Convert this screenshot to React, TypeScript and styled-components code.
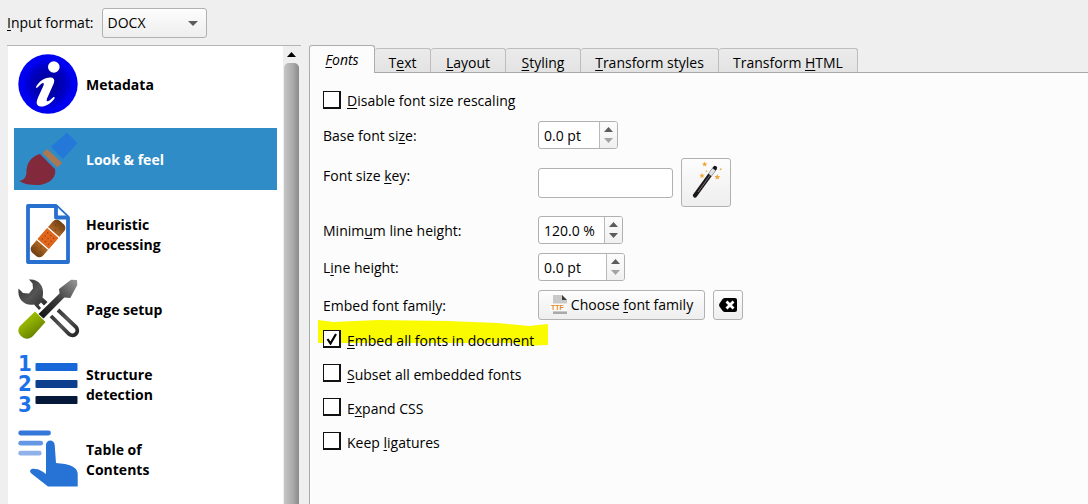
import React from "react";
import styled, { createGlobalStyle, css } from "styled-components";

const GlobalStyle = createGlobalStyle`
  *, *::before, *::after { box-sizing: border-box; }
  body { margin: 0; background: #efefef; }
  body, button, input, select {
    font-family: "Segoe UI", "Open Sans", "Noto Sans", sans-serif;
    font-size: 14px;
    line-height: 20px;
    color: #000;
  }
  u { text-decoration: underline; text-decoration-thickness: 1px; text-underline-offset: 2px; text-decoration-skip-ink: none; }
`;

const raised = css`
  border: 1px solid #b1b1b1;
  border-radius: 3px;
  background: linear-gradient(#fdfdfd, #eeeeee);
`;

const Page = styled.div`
  display: flex;
  flex-direction: column;
  min-height: 100vh;
`;

const FormatBar = styled.div`
  display: flex;
  align-items: center;
  gap: 8px;
  padding: 8px 7px 7px;
`;

const SelectBox = styled.div`
  display: grid;
  align-items: center;
  width: 105px;
  > * { grid-area: 1 / 1; }
  > svg { justify-self: end; margin-right: 9px; pointer-events: none; }
`;

const Select = styled.select`
  ${raised}
  appearance: none;
  width: 100%;
  height: 30px;
  padding: 0 24px 0 5px;
`;

const Body = styled.div`
  display: flex;
  flex: 1;
  gap: 8px;
  padding-left: 7px;
`;

const Sidebar = styled.nav`
  display: flex;
  flex: none;
  width: 294px;
  border-top: 1px solid #b4b4b4;
`;

const SectionList = styled.ul`
  display: flex;
  flex: 1;
  flex-direction: column;
  gap: 13px;
  margin: 0 0 0 1px;
  padding: 7px 6px;
  list-style: none;
  background: #fff;
`;

const SectionButton = styled.button<{ $selected?: boolean }>`
  display: flex;
  align-items: center;
  gap: 8px;
  width: 100%;
  height: 62px;
  padding: 0 4px;
  border: 0;
  text-align: left;
  font-weight: 700;
  color: ${(p) => (p.$selected ? "#fff" : "#000")};
  background: ${(p) => (p.$selected ? "#308cc6" : "transparent")};
`;

const SectionLabel = styled.span`
  width: 100px;
  padding-top: 2px;
`;

const ScrollBar = styled.div`
  display: flex;
  flex-direction: column;
  width: 18px;
  padding: 0 2px 0 1px;
`;

const ScrollButton = styled.button`
  display: flex;
  align-items: center;
  justify-content: center;
  height: 17px;
  padding: 0;
  border: 0;
  background: transparent;
`;

const ScrollThumb = styled.div`
  flex: 1;
  border-radius: 5px 5px 0 0;
  background: linear-gradient(90deg, #c6c6c6, #a9a9a9 60%, #8a8a8a);
`;

const Settings = styled.main`
  display: flex;
  flex: 1;
  flex-direction: column;
  min-width: 0;
`;

const TabList = styled.div`
  display: flex;
  align-items: flex-end;
  height: 27px;
`;

const Tab = styled.button<{ $width: number }>`
  width: ${(p) => p.$width}px;
  height: 24px;
  padding: 5px 0 0;
  border: 1px solid #bdbdbd;
  border-left-width: 0;
  border-bottom: 0;
  border-radius: 3px 3px 0 0;
  background: linear-gradient(#ebebeb, #e3e3e3);
  white-space: nowrap;
  line-height: 18px;
  &[aria-selected="true"] {
    z-index: 1;
    height: 28px;
    margin-bottom: -1px;
    padding: 4px 0;
    border-left-width: 1px;
    border-color: #adadad;
    background: #fcfcfc;
    font-style: italic;
  }
`;

const Pane = styled.section`
  display: flex;
  flex: 1;
  flex-direction: column;
  gap: 9px;
  padding: 16px 13px;
  border: 1px solid #a9a9a9;
  border-width: 1px 0 0 1px;
  background: #fcfcfc;
`;

const Row = styled.div<{ $top?: boolean }>`
  display: grid;
  grid-template-columns: 206px 1fr;
  align-items: ${(p) => (p.$top ? "start" : "center")};
  column-gap: 9px;
  > label { padding-top: ${(p) => (p.$top ? 8 : 2)}px; }
`;

const Controls = styled.div`
  display: flex;
  align-items: center;
  gap: 8px;
`;

const TextInput = styled.input`
  width: 135px;
  height: 30px;
  padding: 0 5px;
  border: 1px solid #b1b1b1;
  border-radius: 3px;
  background: #fff;
`;

const SpinFrame = styled.div<{ $width: number }>`
  display: flex;
  width: ${(p) => p.$width}px;
  height: 28px;
  overflow: hidden;
  border: 1px solid #b1b1b1;
  border-radius: 3px;
  background: #fff;
`;

const SpinInput = styled.input`
  flex: 1;
  min-width: 0;
  padding: 1px 0 0 5px;
  border: 0;
  background: transparent;
`;

const SpinButtons = styled.div`
  display: flex;
  flex-direction: column;
  width: 18px;
  border-left: 1px solid #b9b9b9;
  background: linear-gradient(#fcfcfc, #f0f0f0);
`;

const SpinButton = styled.button<{ $down?: boolean }>`
  display: flex;
  flex: 1;
  align-items: ${(p) => (p.$down ? "flex-start" : "flex-end")};
  justify-content: center;
  padding: 3px 0;
  border: 0;
  background: transparent;
  color: #5c5c5c;
  &:disabled { color: #a3a3a3; }
`;

const PushButton = styled.button<{ $width: number; $height: number }>`
  ${raised}
  display: flex;
  align-items: center;
  justify-content: center;
  gap: 3px;
  width: ${(p) => p.$width}px;
  height: ${(p) => p.$height}px;
  padding: 0;
  white-space: nowrap;
`;

const CheckGroup = styled.div`
  display: flex;
  flex-direction: column;
  gap: 14px;
`;

const CheckLabel = styled.label<{ $tall?: boolean }>`
  position: relative;
  display: flex;
  align-items: center;
  align-self: flex-start;
  gap: 6px;
  height: ${(p) => (p.$tall ? 23 : 20)}px;
  padding-bottom: ${(p) => (p.$tall ? 2 : 0)}px;
`;

const CheckText = styled.span`
  position: relative;
  padding-top: 3px;
`;

const CheckBox = styled.span`
  position: relative;
  display: grid;
  > svg { grid-area: 1 / 1; place-self: center; pointer-events: none; }
`;

const CheckInput = styled.input`
  grid-area: 1 / 1;
  appearance: none;
  width: 18px;
  height: 18px;
  margin: 0;
  border: 2px solid #111;
  border-width: 1px 2px 2px 1px;
  background: #fff;
`;

const Marker = styled.svg`
  position: absolute;
  top: -10px;
  left: -5px;
`;

const Triangle = ({ up, width = 9, height = 5, fill = "currentColor" }: { up?: boolean; width?: number; height?: number; fill?: string }) => (
  <svg width={width} height={height} viewBox="0 0 10 5" preserveAspectRatio="none" aria-hidden="true">
    <path d={up ? "M0 5 5 0l5 5z" : "M0 0h10L5 5z"} fill={fill} />
  </svg>
);

const GlyphBox = styled.svg`
  flex: none;
  overflow: visible;
`;

const Glyph = ({ children }: { children: React.ReactNode }) => (
  <GlyphBox width="60" height="60" viewBox="0 0 60 60" aria-hidden="true">{children}</GlyphBox>
);

const InfoIcon = () => (
  <Glyph>
    <defs>
      <radialGradient id="info">
        <stop offset="0" stopColor="#00008c" />
        <stop offset="0.6" stopColor="#0000c4" />
        <stop offset="0.85" stopColor="#0000f4" />
        <stop offset="1" stopColor="#0000f0" />
      </radialGradient>
    </defs>
    <circle cx="30" cy="30" r="29.7" fill="url(#info)" />
    <circle cx="35.8" cy="13" r="5.8" fill="#fff" />
    <path d="M18 33c3-6 9-10 15-9.500 4 .5 3.500 4 2.500 6.500L29 44.500c-1 3 .5 3.500 2.500 2l4-3.500c1.500-.5 1.500 1 .5 2.200-4 5-10 8.300-14.500 7-4-1.200-3-5-1.500-8.700l5.500-12c1-3-.5-3-2.500-1.500l-3 3c-1.500 1.200-2.500 1-2 0z" fill="#fff" />
  </Glyph>
);

const BrushIcon = () => (
  <Glyph>
    <path d="M49 3.500 59.500 14 45 30 33 18z" fill="#2479d8" />
    <path d="m29 20 15 14-4.500 4.500-15-14.500z" fill="#ad7850" />
    <path d="m22 25 15 15c2 9-7 16-18 16-7 0-13-1-17.700-4C6 51 8 48.500 8.500 44 8 34 14 27 22 25z" fill="#82293b" />
  </Glyph>
);

const BandageIcon = () => (
  <Glyph>
    <defs>
      <linearGradient id="bandage">
        <stop offset="0" stopColor="#6d3f12" />
        <stop offset="0.25" stopColor="#a96322" />
        <stop offset="0.75" stopColor="#a76224" />
        <stop offset="1" stopColor="#6d3f12" />
      </linearGradient>
    </defs>
    <path d="M10 2h28l12 11.500V58H10z" fill="#fff" stroke="#2770d0" strokeWidth="3.800" strokeLinejoin="round" />
    <path d="M38 2v11.500h12" fill="#fff" stroke="#2770d0" strokeWidth="3.800" strokeLinejoin="round" />
    <g transform="translate(30 34.500) rotate(-49)">
      <rect x="-21" y="-7.500" width="42" height="15" rx="5" fill="url(#bandage)" />
      <rect x="-7.500" y="-7.500" width="15" height="15" fill="#e0661b" />
      <path d="M-8-8V8M8-8V8" stroke="#fff" strokeWidth="1.300" />
      <path d="M-4-4v.1M0-4v.1M4-4v.1M-4 0v.1M0 0v.1M4 0v.1M-4 4v.1M0 4v.1M4 4v.1" stroke="#a3400b" strokeWidth="1.400" strokeLinecap="round" />
      <path d="M-15-3v.1M-15 3v.1M-11 0v.1M15-3v.1M15 3v.1M11 0v.1" stroke="#70400f" strokeWidth="1.200" strokeLinecap="round" />
    </g>
  </Glyph>
);

const ToolsIcon = () => (
  <Glyph>
    <defs>
      <linearGradient id="steel" x1="0" y1="0" x2="1" y2="1">
        <stop offset="0" stopColor="#2d2d2d" />
        <stop offset="0.5" stopColor="#555" />
        <stop offset="1" stopColor="#242424" />
      </linearGradient>
      <linearGradient id="blade" x1="0" y1="1" x2="1" y2="0">
        <stop offset="0" stopColor="#111" />
        <stop offset="0.5" stopColor="#3d3d3d" />
        <stop offset="1" stopColor="#9a9a9a" />
      </linearGradient>
      <linearGradient id="grip" x1="0" y1="0" x2="0.700" y2="1">
        <stop offset="0" stopColor="#b4d400" />
        <stop offset="0.5" stopColor="#8cab00" />
        <stop offset="1" stopColor="#5d7500" />
      </linearGradient>
    </defs>
    <path d="M11 .5c9-1 15 6 14 15l-.5 3 5 4.500-3.500 3.500-3-3-2.500 2.500 2.500 3-2 2-5-5.500C7 27-1 21 .5 9.500L5 14l6 .5 4-5-.5-5z" fill="url(#steel)" />
    <path d="m33 37 18 18c5 4 11-2 7-7L40 31" fill="none" stroke="url(#steel)" strokeWidth="3.800" />
    <path d="m20.500 35 21-20.500L41 10 53 .8l6 .2.3 5-7 13-6-.5L25.500 39.500z" fill="url(#blade)" />
    <path d="M17 32.500 27.500 43 15 57c-4 4-9 3-12 0s-4-7 0-11z" fill="url(#grip)" />
  </Glyph>
);

const Numeral = styled.text`
  font: 700 22px "DejaVu Sans Condensed", "DejaVu Sans", sans-serif;
  fill: #1b72e8;
`;

const NumberedIcon = () => (
  <Glyph>
    <Numeral x="0" y="17">1</Numeral>
    <Numeral x="0" y="37">2</Numeral>
    <Numeral x="0" y="58">3</Numeral>
    <rect x="17.500" y="9" width="42" height="8" rx="1" fill="#1767d9" />
    <rect x="17.500" y="26" width="42" height="8" rx="1" fill="#0c3f8d" />
    <rect x="17.500" y="42" width="42" height="8" rx="1" fill="#05183a" />
  </Glyph>
);

const TouchIcon = () => (
  <Glyph>
    <g fill="none" strokeWidth="4.800" strokeLinecap="round">
      <path d="M2.700 4h27.800" stroke="#3578da" />
      <path d="M2.700 14.200h20" stroke="#6497e4" />
      <path d="M2.700 24.200h18.500" stroke="#8fb2ea" />
    </g>
    <path d="M28 45V16c0-6 8.500-6 8.700 0L38 34l9 1c8 1.500 12.700 5 12.700 10v12.500H30L14 45c-4-3-1-6 3-5 4 0 7 2 11 5z" fill="#2673d5" />
  </Glyph>
);

const star = (x: number, y: number, r: number) => {
  const points = Array.from({ length: 10 }, (_, i) => {
    const a = (Math.PI * i) / 5 - Math.PI / 2;
    const d = i % 2 ? r * 0.450 : r;
    return `${(x + Math.cos(a) * d).toFixed(1)},${(y + Math.sin(a) * d).toFixed(1)}`;
  });
  return points.join(" ");
};

const WandIcon = () => (
  <svg width="48" height="47" viewBox="0 0 48 47" aria-hidden="true">
    <path d="M13 36.500 33 9" stroke="#1a1718" strokeWidth="4.200" strokeLinecap="round" />
    <path d="M16 33 29 15" stroke="#77717a" strokeWidth="1" />
    <path d="m28 15.800 4-5.500" stroke="#dfe3e8" strokeWidth="3.800" />
    <polygon points={star(22.700, 5.300, 2.800)} fill="#efa63a" />
    <polygon points={star(20, 16.700, 2.800)} fill="#efa63a" />
    <polygon points={star(35.300, 18, 3)} fill="#efa63a" />
    <circle cx="38.700" cy="10.300" r="1" fill="#e4b45f" />
    <circle cx="24.500" cy="12.300" r="0.800" fill="#efa63a" />
  </svg>
);

const FileText = styled.text`
  font: 700 7px "Liberation Sans", sans-serif;
  fill: #e08b24;
`;

const FontFileIcon = () => (
  <svg width="18" height="20" viewBox="0 0 18 20" aria-hidden="true">
    <path d="M3 0h9l5 5v14H3z" fill="#c9c9c9" />
    <path d="M12 0v5h5z" fill="#3c3c3c" />
    <path d="M0 8.500h17V16H0z" fill="#fafafa" />
    <path d="M3 17h14v2H3z" fill="#aaa" />
    <FileText x="1" y="15">TTF</FileText>
  </svg>
);

const ClearIcon = () => (
  <svg width="18" height="14" viewBox="0 0 18 14" aria-hidden="true">
    <path d="M6 0h10q2 0 2 2v10q0 2-2 2H6Q4.500 14 3.500 12.700L.5 8.500Q-.3 7 .5 5.500L3.500 1.300Q4.500 0 6 0z" fill="#000" />
    <path d="m7.500 3.500 7 7m0-7-7 7" stroke="#fff" strokeWidth="2.800" />
  </svg>
);

const sections = [
  { label: "Metadata", Icon: InfoIcon },
  { label: "Look & feel", Icon: BrushIcon, selected: true },
  { label: "Heuristic processing", Icon: BandageIcon },
  { label: "Page setup", Icon: ToolsIcon },
  { label: "Structure detection", Icon: NumberedIcon },
  { label: "Table of Contents", Icon: TouchIcon },
];

const tabs = [
  { text: <><u>F</u>onts</>, width: 66 },
  { text: <>T<u>e</u>xt</>, width: 56 },
  { text: <><u>L</u>ayout</>, width: 75 },
  { text: <><u>S</u>tyling</>, width: 75 },
  { text: <><u>T</u>ransform styles</>, width: 138 },
  { text: <>Transform <u>H</u>TML</>, width: 139 },
];

const SpinBox = ({ id, value, width, atMinimum }: { id: string; value: string; width: number; atMinimum?: boolean }) => (
  <SpinFrame $width={width}>
    <SpinInput id={id} defaultValue={value} />
    <SpinButtons>
      <SpinButton aria-label="Increase"><Triangle up /></SpinButton>
      <SpinButton $down aria-label="Decrease" disabled={atMinimum}><Triangle /></SpinButton>
    </SpinButtons>
  </SpinFrame>
);

const Check = ({ children, checked, tall, marked }: { children: React.ReactNode; checked?: boolean; tall?: boolean; marked?: boolean }) => (
  <CheckLabel $tall={tall}>
    {marked && (
      <Marker width="230" height="28" viewBox="0 0 230 28" aria-hidden="true">
        <path d="M0 1 15 3 60 1l70 1 50 2 31 3 19-2v21l-25 1-7-3H0z" fill="#fbfb00" />
      </Marker>
    )}
    <CheckBox>
      <CheckInput type="checkbox" defaultChecked={checked} />
      {checked && (
        <svg width="12" height="12" viewBox="0 0 12 12" aria-hidden="true">
          <path d="m1.500 6 3 4.500L10 1" fill="none" stroke="#000" strokeWidth="2.200" />
        </svg>
      )}
    </CheckBox>
    <CheckText>{children}</CheckText>
  </CheckLabel>
);

export default function App() {
  return (
    <Page>
      <GlobalStyle />
      <FormatBar>
        <label htmlFor="format"><u>I</u>nput format:</label>
        <SelectBox>
          <Select id="format" defaultValue="DOCX"><option>DOCX</option></Select>
          <Triangle width={10} fill="#5c5c5c" />
        </SelectBox>
      </FormatBar>
      <Body>
        <Sidebar aria-label="Conversion sections">
          <SectionList>
            {sections.map(({ label, Icon, selected }) => (
              <li key={label}>
                <SectionButton $selected={selected}>
                  <Icon />
                  <SectionLabel>{label}</SectionLabel>
                </SectionButton>
              </li>
            ))}
          </SectionList>
          <ScrollBar>
            <ScrollButton aria-label="Scroll up"><Triangle up fill="#000" /></ScrollButton>
            <ScrollThumb />
          </ScrollBar>
        </Sidebar>
        <Settings>
          <TabList role="tablist">
            {tabs.map((tab, i) => (
              <Tab key={i} role="tab" aria-selected={i === 0} $width={tab.width}>{tab.text}</Tab>
            ))}
          </TabList>
          <Pane role="tabpanel">
            <Check tall><u>D</u>isable font size rescaling</Check>
            <Row>
              <label htmlFor="base">Base font si<u>z</u>e:</label>
              <SpinBox id="base" value="0.0 pt" width={80} atMinimum />
            </Row>
            <Row $top>
              <label htmlFor="key">Font size <u>k</u>ey:</label>
              <Controls>
                <TextInput id="key" />
                <PushButton $width={50} $height={49} aria-label="Font size wizard"><WandIcon /></PushButton>
              </Controls>
            </Row>
            <Row>
              <label htmlFor="minimum">Minim<u>u</u>m line height:</label>
              <SpinBox id="minimum" value="120.0 %" width={85} />
            </Row>
            <Row>
              <label htmlFor="line">L<u>i</u>ne height:</label>
              <SpinBox id="line" value="0.0 pt" width={87} atMinimum />
            </Row>
            <Row>
              <label htmlFor="family">Embed font fami<u>l</u>y:</label>
              <Controls>
                <PushButton id="family" $width={167} $height={30}>
                  <FontFileIcon />
                  <span>Choose <u>f</u>ont family</span>
                </PushButton>
                <PushButton $width={30} $height={30} aria-label="Clear font family"><ClearIcon /></PushButton>
              </Controls>
            </Row>
            <CheckGroup>
              <Check checked marked><u>E</u>mbed all fonts in document</Check>
              <Check><u>S</u>ubset all embedded fonts</Check>
              <Check>E<u>x</u>pand CSS</Check>
              <Check>Keep <u>l</u>igatures</Check>
            </CheckGroup>
          </Pane>
        </Settings>
      </Body>
    </Page>
  );
}
